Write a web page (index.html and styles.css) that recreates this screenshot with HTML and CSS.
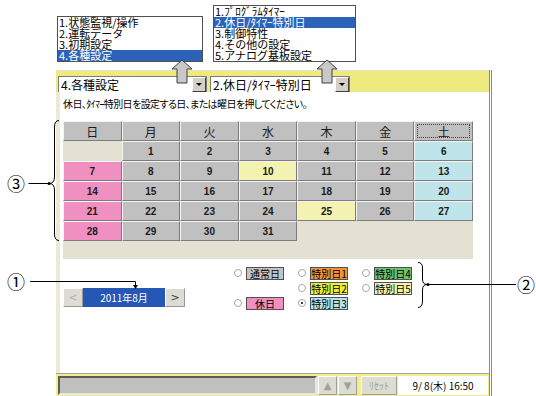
FILE: index.html
```html
<!DOCTYPE html>
<html lang="ja">
<head>
<meta charset="UTF-8" />
<title>休日/タイマー特別日 設定</title>
<link rel="stylesheet" href="styles.css">
</head>
<body>
<div class="stage">
	<div class="frame">
		<div class="toolbar">
			<div class="select sel-menu"><span class="sel-text">4.各種設定</span><span class="sel-btn"></span></div>
			<div class="select sel-sub"><span class="sel-text">2.休日/ﾀｲﾏｰ特別日</span><span class="sel-btn"></span></div>
		</div>

		<div class="content">
			<p class="hint">休日、ﾀｲﾏｰ特別日を設定する日、または曜日を押してください。</p>

			<div class="calendar">
				<div class="cal-grid">
					<div class="cell head">日</div>
					<div class="cell head">月</div>
					<div class="cell head">火</div>
					<div class="cell head">水</div>
					<div class="cell head">木</div>
					<div class="cell head">金</div>
					<div class="cell head focus">土</div>

					<div class="cell blank"></div>
					<div class="cell">1</div>
					<div class="cell">2</div>
					<div class="cell">3</div>
					<div class="cell">4</div>
					<div class="cell">5</div>
					<div class="cell sat">6</div>

					<div class="cell hol">7</div>
					<div class="cell">8</div>
					<div class="cell">9</div>
					<div class="cell sp5">10</div>
					<div class="cell">11</div>
					<div class="cell">12</div>
					<div class="cell sat">13</div>

					<div class="cell hol">14</div>
					<div class="cell">15</div>
					<div class="cell">16</div>
					<div class="cell">17</div>
					<div class="cell">18</div>
					<div class="cell">19</div>
					<div class="cell sat">20</div>

					<div class="cell hol">21</div>
					<div class="cell">22</div>
					<div class="cell">23</div>
					<div class="cell">24</div>
					<div class="cell sp5">25</div>
					<div class="cell">26</div>
					<div class="cell sat">27</div>

					<div class="cell hol">28</div>
					<div class="cell">29</div>
					<div class="cell">30</div>
					<div class="cell">31</div>
				</div>
			</div>

			<div class="lower">
				<div class="month-nav">
					<span class="nav-btn off">&lt;</span>
					<span class="month">2011年8月</span>
					<span class="nav-btn">&gt;</span>
				</div>

				<div class="legend">
					<div class="item"><span class="radio"></span><span class="tag normal">通常日</span></div>
					<div class="item empty"></div>
					<div class="item"><span class="radio"></span><span class="tag holiday">休日</span></div>

					<div class="item"><span class="radio"></span><span class="tag sp1">特別日1</span></div>
					<div class="item"><span class="radio"></span><span class="tag sp2">特別日2</span></div>
					<div class="item"><span class="radio on"></span><span class="tag sp3">特別日3</span></div>

					<div class="item"><span class="radio"></span><span class="tag sp4">特別日4</span></div>
					<div class="item"><span class="radio"></span><span class="tag sp5">特別日5</span></div>
				</div>
			</div>
		</div>

		<div class="statusbar">
			<div class="status-field"></div>
			<span class="sbtn">▲</span>
			<span class="sbtn">▼</span>
			<span class="sbtn reset">ﾘｾｯﾄ</span>
			<div class="clock">9/ 8(木) 16:50</div>
		</div>
	</div>

	<!-- dropdown lists shown opened above the two selects -->
	<ul class="popup pop-menu">
		<li>1.状態監視/操作</li>
		<li>2.運転データ</li>
		<li>3.初期設定</li>
		<li class="picked">4.各種設定</li>
	</ul>
	<ul class="popup pop-sub">
		<li>1.ﾌﾟﾛｸﾞﾗﾑﾀｲﾏｰ</li>
		<li class="picked">2.休日/ﾀｲﾏｰ特別日</li>
		<li>3.制御特性</li>
		<li>4.その他の設定</li>
		<li>5.アナログ基板設定</li>
	</ul>

	<svg class="callouts" width="536" height="396" viewBox="0 0 536 396">
		<polygon class="up" points="182,60 172,69 177,69 177,83 187,83 187,69 192,69" />
		<polygon class="up" points="327,60 317,69 322,69 322,83 332,83 332,69 337,69" />

		<path class="ln" d="M28.5,183.5 H48" />
		<path class="ln" d="M59,120.5 Q54.5,120.5 54.5,127 V177 Q54.5,183.5 49,183.5 Q54.5,183.5 54.5,190 V234 Q54.5,240.5 59,240.5" />
		<circle cx="49" cy="183.5" r="1.5" />

		<path class="ln" d="M30,281.5 H135.5 V286" />
		<polygon points="133,285 138,285 135.5,289" />

		<path class="ln" d="M418,262.5 Q422.5,262.5 422.5,268 V279 Q422.5,284.5 427,284.5 Q422.5,284.5 422.5,290 V301 Q422.5,307.5 418,307.5" />
		<path class="ln" d="M428,284.5 H516" />
		<circle cx="428" cy="284.5" r="1.5" />
	</svg>

	<span class="mark m1">①</span>
	<span class="mark m2">②</span>
	<span class="mark m3">③</span>
</div>
</body>
</html>
```

FILE: styles.css
```css
body {
	margin: 0;
	background-color: white;
	font-family: "Noto Sans CJK JP", "DejaVu Sans", sans-serif;
	color: black;
}

.stage {
	position: relative;
	width: 536px;
	height: 396px;
	overflow: hidden;
}

/* main window */
.frame {
	margin: 70px 0 0 56px;
	width: 436px;
	height: 326px;
	box-sizing: border-box;
	display: flex;
	flex-direction: column;
	border-right: 3px double #8c8c84;
}

.toolbar {
	height: 22px;
	box-sizing: border-box;
	display: flex;
	gap: 3px;
	padding: 5px 0 0 2px;
	background-color: #eeea7e;
	border-top: 1px solid #e4e2d2;
}

.select {
	height: 17px;
	box-sizing: border-box;
	display: flex;
	align-items: center;
	background-color: white;
	border: 1px solid #7c7c7c;
}

.sel-menu { width: 149px; }
.sel-sub { width: 140px; }

.sel-text {
	flex: 1;
	font-size: 12px;
	line-height: 15px;
	padding-left: 2px;
	white-space: nowrap;
}

.sel-btn {
	position: relative;
	width: 14px;
	height: 15px;
	box-sizing: border-box;
	background-color: #d4d0c8;
	border: 1px solid;
	border-color: #fff #404040 #404040 #fff;
}

.sel-btn::after {
	content: "";
	position: absolute;
	left: 3px;
	top: 5px;
	border-left: 3px solid transparent;
	border-right: 3px solid transparent;
	border-top: 3px solid black;
}

.content {
	flex: 1;
	padding: 5px 0 0 3px;
	border-left: 4px solid #ece9d8;
	background-color: white;
}

.hint {
	margin: 0 0 10px 0;
	font-size: 10px;
	line-height: 14px;
	letter-spacing: -0.6px;
	font-feature-settings: "palt";
	white-space: nowrap;
}

/* calendar */
.calendar {
	width: 410px;
	padding-bottom: 18px;
	background-color: #e4e1d3;
}

.cal-grid {
	display: grid;
	grid-template-columns: repeat(7, 1fr);
	grid-auto-rows: 20px;
}

.cell {
	box-sizing: border-box;
	display: flex;
	align-items: center;
	justify-content: center;
	background-color: #c0c0c0;
	border: 1px solid;
	border-color: #f4f4f4 #7c7c7c #7c7c7c #f4f4f4;
	font-family: "Liberation Sans", sans-serif;
	font-weight: bold;
	font-size: 10px;
	color: #1a1a1a;
}

.cell.head {
	font-family: "Noto Sans CJK JP", sans-serif;
	font-weight: normal;
	font-size: 12px;
}

.cell.focus {
	outline: 1px dotted #404040;
	outline-offset: -4px;
}

.cell.blank {
	background-color: transparent;
	border-color: transparent;
}

.cell.hol { background-color: #ef90c0; }
.cell.sat { background-color: #bfe5ea; }
.cell.sp5 { background-color: #f4f2b0; }

.lower {
	display: flex;
	align-items: flex-start;
	margin-top: 7px;
}

.month-nav {
	display: flex;
	height: 19px;
	margin-top: 22px;
}

.nav-btn {
	width: 20px;
	box-sizing: border-box;
	display: flex;
	align-items: center;
	justify-content: center;
	background-color: #dcdcd4;
	border: 1px solid;
	border-color: #fff #9a9a94 #9a9a94 #fff;
	font-family: "DejaVu Sans", sans-serif;
	font-size: 11px;
	color: #404040;
}

.nav-btn.off { color: #b0b0a8; }

.month {
	width: 82px;
	display: flex;
	align-items: center;
	justify-content: center;
	background-color: #2458b4;
	color: white;
	font-size: 10px;
	font-feature-settings: "palt";
}

.legend {
	margin-left: 49px;
	display: grid;
	grid-template-columns: repeat(3, 64px);
	grid-template-rows: repeat(3, 14px);
	grid-auto-flow: column;
	row-gap: 1px;
}

.item {
	display: flex;
	align-items: center;
	gap: 4px;
}

.radio {
	position: relative;
	width: 8px;
	height: 8px;
	box-sizing: border-box;
	border: 1px solid #a8a8a8;
	border-radius: 50%;
	background-color: white;
}

.radio.on::after {
	content: "";
	position: absolute;
	left: 2px;
	top: 2px;
	width: 2px;
	height: 2px;
	background-color: black;
	border-radius: 50%;
}

.tag {
	width: 38px;
	height: 13px;
	box-sizing: border-box;
	border: 1px solid #505050;
	font-size: 10px;
	line-height: 11px;
	text-align: center;
	white-space: nowrap;
	overflow: hidden;
}

.tag.normal { background-color: #c4c4c4; }
.tag.holiday { background-color: #ef90c0; }
.tag.sp1 { background-color: #f4923c; }
.tag.sp2 { background-color: #eeee3c; }
.tag.sp3 { background-color: #b8e3e9; }
.tag.sp4 { background-color: #6fc06f; }
.tag.sp5 { background-color: #f4f2b0; }

/* bottom bar */
.statusbar {
	height: 23px;
	box-sizing: border-box;
	display: flex;
	gap: 1px;
	padding: 2px 1px 1px 2px;
	border-top: 1px solid #a4a49c;
	background-color: #f2ee8c;
}

.status-field {
	width: 259px;
	box-sizing: border-box;
	background-color: #c0c0c0;
	border: 2px solid;
	border-color: #5c5c58 #e8e8e0 #e8e8e0 #5c5c58;
}

.sbtn {
	width: 19px;
	box-sizing: border-box;
	display: flex;
	align-items: center;
	justify-content: center;
	background-color: #dcdcd2;
	border: 1px solid;
	border-color: #fff #a0a09a #a0a09a #fff;
	font-family: "DejaVu Sans", sans-serif;
	font-size: 10px;
	color: #a0a09c;
}

.sbtn.reset {
	width: 36px;
	margin-left: 3px;
	font-family: "Noto Sans CJK JP", sans-serif;
	font-size: 10px;
}

.clock {
	flex: 1;
	display: flex;
	align-items: center;
	justify-content: center;
	background-color: white;
	font-size: 10px;
	font-feature-settings: "palt";
}

/* opened dropdown lists */
.popup {
	position: absolute;
	margin: 0;
	padding: 0;
	list-style: none;
	background-color: white;
	border: 1px solid #505050;
	font-size: 11px;
	line-height: 11px;
	white-space: nowrap;
}

.popup li {
	height: 11px;
	padding-left: 1px;
}

.popup li.picked {
	background-color: #2c63b8;
	color: white;
}

.pop-menu {
	left: 57px;
	top: 16px;
	width: 144px;
}

.pop-sub {
	left: 213px;
	top: 5px;
	width: 141px;
}

/* annotation lines and arrows */
.callouts {
	position: absolute;
	left: 0;
	top: 0;
}

.callouts .up {
	fill: #c8c8c8;
	stroke: #404040;
	stroke-width: 1;
}

.callouts .ln {
	fill: none;
	stroke: black;
	stroke-width: 1;
}

.mark {
	position: absolute;
	font-size: 18px;
	line-height: 20px;
}

.m1 { left: 7px; top: 271px; }
.m2 { left: 517px; top: 274px; }
.m3 { left: 7px; top: 173px; }
```
